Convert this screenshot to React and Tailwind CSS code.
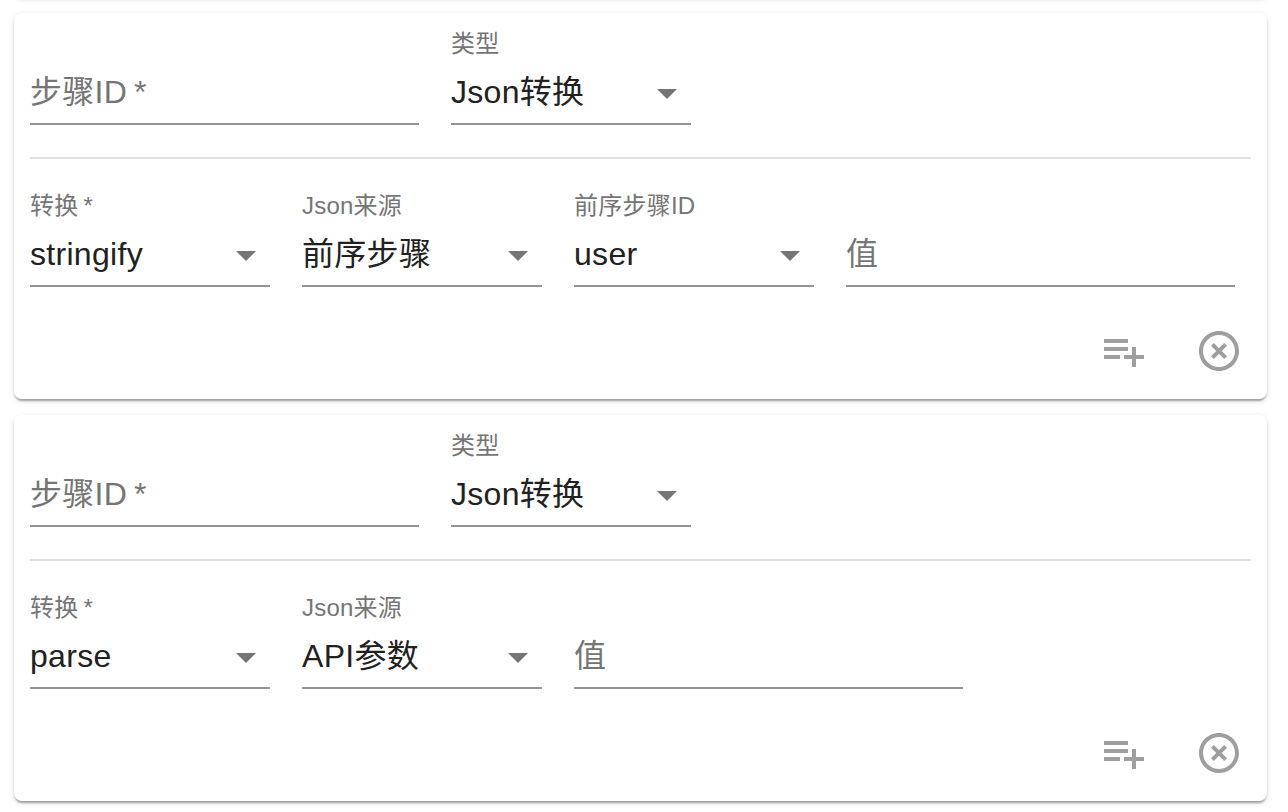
const font = { fontFamily: "'Liberation Sans', 'Noto Sans CJK SC', sans-serif" };

const ArrowDown = () => (
  <svg viewBox="0 0 24 24" className="absolute right-0 top-[5px] w-12 h-12 fill-[#757575]">
    <path d="M7 10l5 5 5-5z" />
  </svg>
);

const Field = ({ label, value, placeholder, select, className }) => (
  <div className={`relative pt-8 shrink-0 ${className}`}>
    {label && (
      <div className="absolute left-0 top-0 text-[24px] leading-[24px] tracking-[0.225px] text-[#757575]">{label}</div>
    )}
    <div className="relative h-[61px] border-b-2 border-[#949494] pt-2.5 text-[32px] leading-[37px] tracking-[0.3px]">
      {value ? (
        <span className="text-[#212121]">{value}</span>
      ) : (
        <span className="text-[#757575]">{placeholder}</span>
      )}
      {select && <ArrowDown />}
    </div>
  </div>
);

const StepCard = ({ children }) => (
  <div className="h-[386px] bg-white rounded-lg px-4 shadow-[0_4px_2px_-2px_rgba(0,0,0,0.2),0_2px_2px_0_rgba(0,0,0,0.14),0_2px_6px_0_rgba(0,0,0,0.12)]">
    <div className="flex gap-8 pt-[19px]">
      <Field placeholder={"步骤ID\u2009*"} className="w-[389px]" />
      <Field label="类型" value="Json转换" select className="w-60" />
    </div>
    <div className="h-0.5 bg-[#e0e0e0] mt-8" />
    <div className="flex gap-8 pt-[35px]">{children}</div>
    <div className="flex justify-end items-center gap-[47px] pr-2 pt-10">
      <svg viewBox="0 0 24 24" className="w-12 h-12 fill-[#9e9e9e]">
        <path d="M14 10H2v2h12v-2zm0-4H2v2h12V6zm4 8v-4h-2v4h-4v2h4v4h2v-4h4v-2h-4zM2 16h8v-2H2v2z" />
      </svg>
      <svg viewBox="0 0 24 24" className="w-12 h-12 fill-[#9e9e9e]">
        <path d="M14.59 8L12 10.59 9.41 8 8 9.41 10.59 12 8 14.59 9.41 16 12 13.41 14.59 16 16 14.59 13.41 12 16 9.41 14.59 8zM12 2C6.47 2 2 6.47 2 12s4.47 10 10 10 10-4.47 10-10S17.53 2 12 2zm0 18c-4.41 0-8-3.59-8-8s3.59-8 8-8 8 3.59 8 8-3.59 8-8 8z" />
      </svg>
    </div>
  </div>
);

export default function App() {
  return (
    <div style={font} className="h-[812px] overflow-hidden bg-white pl-[14px] pr-[21px]">
      {/* tail of the previous card */}
      <div className="h-[20px] -mt-[23px] mb-4 bg-white rounded-lg shadow-[0_4px_2px_-2px_rgba(0,0,0,0.2),0_2px_2px_0_rgba(0,0,0,0.14),0_2px_6px_0_rgba(0,0,0,0.12)]" />
      <div className="flex flex-col gap-4">
        <StepCard>
          <Field label={"转换\u2009*"} value="stringify" select className="w-60" />
          <Field label="Json来源" value="前序步骤" select className="w-60" />
          <Field label="前序步骤ID" value="user" select className="w-60" />
          <Field placeholder="值" className="w-[389px]" />
        </StepCard>
        <StepCard>
          <Field label={"转换\u2009*"} value="parse" select className="w-60" />
          <Field label="Json来源" value="API参数" select className="w-60" />
          <Field placeholder="值" className="w-[389px]" />
        </StepCard>
      </div>
    </div>
  );
}
